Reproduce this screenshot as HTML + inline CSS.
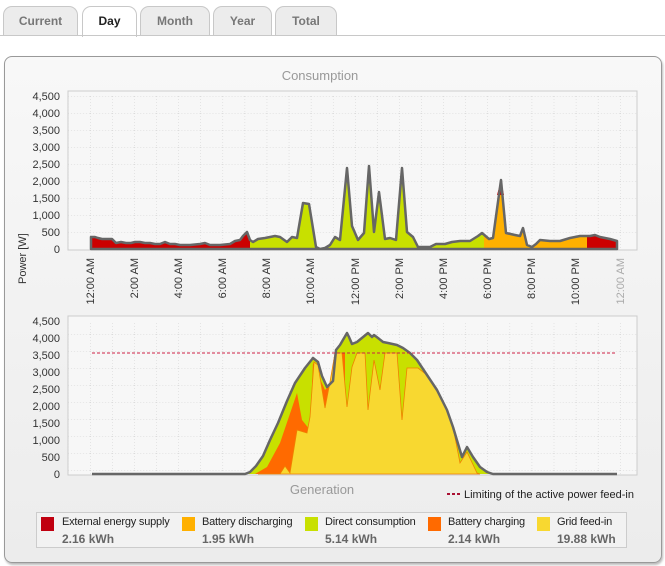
<!DOCTYPE html>
<html><head><meta charset="utf-8"><style>
body{margin:0;width:665px;height:566px;background:#fff;font-family:"Liberation Sans",Tahoma,sans-serif;position:relative;overflow:hidden}
.tab{position:absolute;top:6px;height:29px;border:1px solid #c8c8c8;border-bottom:none;border-radius:9px 9px 0 0;background:#ececec;color:#777;font-weight:bold;font-size:12px;text-align:center;line-height:28px;box-sizing:border-box}
.tab.act{background:#fff;color:#222;height:31px}
.line{position:absolute;left:0;right:0;top:35px;border-top:1px solid #c8c8c8}
.panel{position:absolute;left:4px;top:56px;width:656px;height:505px;border:1px solid #999;border-radius:8px;background:linear-gradient(#f8f8f8,#ececec);box-shadow:1px 2px 2px #bbb}
.lg{position:absolute;font-size:11px;color:#222;letter-spacing:-0.2px;white-space:nowrap}
.sq{position:absolute;width:13px;height:14px}
.v{position:absolute;font-size:12px;font-weight:bold;color:#666}
</style></head><body>
<div class="tab" style="left:3px;width:75px">Current</div>
<div class="tab act" style="left:82px;width:55px">Day</div>
<div class="tab" style="left:140px;width:70px">Month</div>
<div class="tab" style="left:213px;width:59px">Year</div>
<div class="tab" style="left:275px;width:62px">Total</div>
<div class="line"></div>
<div class="panel"></div>
<svg width="665" height="566" style="position:absolute;left:0;top:0" font-family="Liberation Sans, sans-serif">
<defs>
<pattern id="g" x="68" y="96" width="22.08" height="17" patternUnits="userSpaceOnUse">
<path d="M0 0H22.08M0 0V17" stroke="#d0d0d0" stroke-width="1" stroke-dasharray="1,2" fill="none"/>
</pattern>
<clipPath id="cl"><rect x="0" y="0" width="250" height="300"/></clipPath>
<clipPath id="cr"><rect x="587" y="0" width="100" height="300"/></clipPath>
<clipPath id="co"><rect x="484" y="0" width="103" height="300"/></clipPath>
<polygon id="tp" points="91,249 91,237 95,237 98,238 102,239 106,239 112,239 116,243 121,242 126,243 131,243 135,242 140,242 145,243 150,243 155,244 160,244 165,242 170,244 175,244 180,245 190,245 200,244 205,243 210,245 220,245 230,244 235,241 240,240 243,236 247,232 250,240 253,242 258,239 265,238 270,237 275,236 280,237 287,242 292,237 297,238 303,203 309,204 316,247 320,249 325,248 330,245 335,237 340,240 347,168 352,226 358,240 364,233 369,166 374,232 379,192 385,239 390,238 396,240 402,168 407,232 413,237 418,247 430,247 436,244 445,244 452,242 460,241 470,241 478,236 482,233 489,239 493,238 501,180 506,233 515,235 520,236 523,228 527,245 532,247 536,244 540,240 550,241 560,241 570,238 580,236 590,236 595,235 600,237 610,239 617,241 617,249"/>
</defs>
<text x="320" y="80" font-size="13" fill="#999" text-anchor="middle">Consumption</text>
<rect x="68" y="91" width="569" height="159" fill="#f7f7f7" stroke="#ccc"/>
<rect x="68" y="96" width="569" height="153" fill="url(#g)"/>
<rect x="68" y="316" width="569" height="159" fill="#f7f7f7" stroke="#ccc"/>
<rect x="68" y="321" width="569" height="153" fill="url(#g)"/>
<g font-size="11" fill="#333" text-anchor="end">
<text x="60" y="100">4,500</text><text x="60" y="117">4,000</text><text x="60" y="134">3,500</text><text x="60" y="151">3,000</text><text x="60" y="168">2,500</text><text x="60" y="185">2,000</text><text x="60" y="202">1,500</text><text x="60" y="219">1,000</text><text x="60" y="236">500</text><text x="60" y="253">0</text>
<text x="60" y="325">4,500</text><text x="60" y="342">4,000</text><text x="60" y="359">3,500</text><text x="60" y="376">3,000</text><text x="60" y="393">2,500</text><text x="60" y="410">2,000</text><text x="60" y="427">1,500</text><text x="60" y="444">1,000</text><text x="60" y="461">500</text><text x="60" y="478">0</text>
</g>
<text transform="translate(26,284) rotate(-90)" font-size="11" fill="#333">Power [W]</text>
<g font-size="11" fill="#333" text-anchor="end">
<text transform="translate(94,258) rotate(-90)">12:00 AM</text>
<text transform="translate(138,258) rotate(-90)">2:00 AM</text>
<text transform="translate(182,258) rotate(-90)">4:00 AM</text>
<text transform="translate(226,258) rotate(-90)">6:00 AM</text>
<text transform="translate(270,258) rotate(-90)">8:00 AM</text>
<text transform="translate(314,258) rotate(-90)">10:00 AM</text>
<text transform="translate(359,258) rotate(-90)">12:00 PM</text>
<text transform="translate(403,258) rotate(-90)">2:00 PM</text>
<text transform="translate(447,258) rotate(-90)">4:00 PM</text>
<text transform="translate(491,258) rotate(-90)">6:00 PM</text>
<text transform="translate(535,258) rotate(-90)">8:00 PM</text>
<text transform="translate(579,258) rotate(-90)">10:00 PM</text>
<text transform="translate(624,258) rotate(-90)" fill="#aaa">12:00 AM</text>
</g>
<use href="#tp" fill="#c8e000"/>
<use href="#tp" fill="#cc0000" clip-path="url(#cl)"/>
<use href="#tp" fill="#ffb000" clip-path="url(#co)"/>
<use href="#tp" fill="#cc0000" clip-path="url(#cr)"/>
<polygon points="497,195 501,180 504,195" fill="#cc0000"/>
<use href="#tp" fill="none" stroke="#666" stroke-width="2.5" stroke-linejoin="round"/>
<polygon fill="#c8e000" points="245,474 250,472 256,466 263,456 270,440 278,423 287,401 295,383 305,368 313,358 318,362 322,376 327,387 331,383 333,381 336,350 340,345 347,333 349,337 352,344 357,342 368,333 372,337 374,335 378,338 383,342 388,343 397,345 403,348 410,353 417,360 427,375 437,390 447,410 453,427 462,457 467,447 473,457 480,467 487,472 493,474"/>
<polygon fill="#ff6a00" points="255,474 267,467 280,443 297,393 302,420 310,430 313,363 325,390 332,382 335,353 345,353 345,474"/>
<polygon fill="#f8d830" stroke="#f08000" stroke-width="0.8" points="258,474 280,474 285,466 290,473 297,430 307,433 310,417 314,362 318,365 325,408 330,382 335,353 342,353 347,407 352,367 357,353 365,353 368,410 374,360 380,390 385,353 397,353 402,420 407,368 418,368 427,375 437,390 447,410 453,427 460,463 467,452 477,473 480,474"/>
<polyline fill="none" stroke="#666" stroke-width="2.5" stroke-linejoin="round" points="92,474 245,474 250,472 256,466 263,456 270,440 278,423 287,401 295,383 305,368 313,358 318,362 322,376 327,387 331,383 333,381 336,350 340,345 347,333 349,337 352,344 357,342 368,333 372,337 374,335 378,338 383,342 388,343 397,345 403,348 410,353 417,360 427,375 437,390 447,410 453,427 462,457 467,447 473,457 480,467 487,472 493,474 617,474"/>
<line x1="92" y1="353" x2="617" y2="353" stroke="#cc2244" stroke-width="1" stroke-dasharray="3,2"/>
<text x="322" y="494" font-size="13" fill="#999" text-anchor="middle">Generation</text>
<line x1="447" y1="494" x2="460" y2="494" stroke="#aa1133" stroke-width="2" stroke-dasharray="3,2"/>
<text x="464" y="498" font-size="11" fill="#222">Limiting of the active power feed-in</text>
<rect x="36.5" y="512.5" width="590" height="35" fill="#f2f2f2" stroke="#ccc"/>
</svg>
<div class="sq" style="left:41px;top:517px;background:#c00010"></div><div class="lg" style="left:62px;top:516px">External energy supply</div><div class="v" style="left:62px;top:532px">2.16 kWh</div>
<div class="sq" style="left:182px;top:517px;background:#ffb000"></div><div class="lg" style="left:202px;top:516px">Battery discharging</div><div class="v" style="left:202px;top:532px">1.95 kWh</div>
<div class="sq" style="left:305px;top:517px;background:#c8e000"></div><div class="lg" style="left:325px;top:516px">Direct consumption</div><div class="v" style="left:325px;top:532px">5.14 kWh</div>
<div class="sq" style="left:428px;top:517px;background:#ff6a00"></div><div class="lg" style="left:448px;top:516px">Battery charging</div><div class="v" style="left:448px;top:532px">2.14 kWh</div>
<div class="sq" style="left:537px;top:517px;background:#f8d830"></div><div class="lg" style="left:557px;top:516px">Grid feed-in</div><div class="v" style="left:557px;top:532px">19.88 kWh</div>
</body></html>
